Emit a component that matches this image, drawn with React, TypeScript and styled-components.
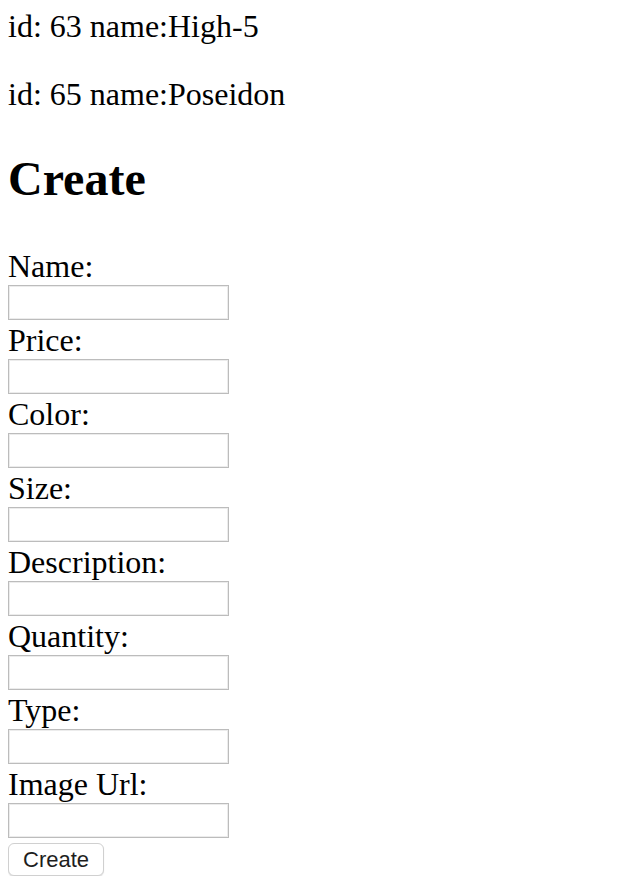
import React from "react";
import styled, { createGlobalStyle } from "styled-components";

const GlobalStyle = createGlobalStyle`
  html, body {
    margin: 0;
    padding: 0;
    background: #ffffff;
  }
  body {
    margin: 0 8px;
    font-family: "Liberation Serif", "Times New Roman", serif;
    font-size: 32px;
    color: #000000;
  }
`;

const Page = styled.div`
  display: flex;
  flex-direction: column;
  padding-top: 8px;
`;

const ProductList = styled.div`
  display: flex;
  flex-direction: column;
  gap: 32px;
`;

const ProductItem = styled.p`
  margin: 0;
  font-size: 32px;
  line-height: 36px;
  white-space: nowrap;
`;

const Heading = styled.h2`
  margin: 39px 0 42px;
  font-size: 48px;
  line-height: 55px;
  font-weight: bold;
`;

const Form = styled.form`
  display: flex;
  flex-direction: column;
  align-items: flex-start;
`;

const Field = styled.div`
  display: flex;
  flex-direction: column;
  align-items: flex-start;
`;

const Label = styled.label`
  display: block;
  font-size: 32px;
  line-height: 37px;
  white-space: nowrap;
`;

const TextInput = styled.input`
  box-sizing: border-box;
  display: block;
  margin: 0 0 2px;
  width: 221px;
  height: 35px;
  padding: 2px 4px;
  border: 1px solid #bcbcbc;
  box-shadow: inset 0 0 0 1px #ececec;
  border-radius: 0;
  background: #ffffff;
  font-family: "Liberation Sans", Arial, sans-serif;
  font-size: 20px;
  outline: none;
`;

const SubmitButton = styled.button`
  box-sizing: border-box;
  margin-top: 3px;
  height: 33px;
  padding: 0 14px;
  border: 1px solid #d0d0d0;
  border-radius: 6px;
  background: #ffffff;
  box-shadow: 0 1px 1px rgba(0, 0, 0, 0.12);
  font-family: "Liberation Sans", Arial, sans-serif;
  font-size: 22px;
  line-height: 31px;
  color: #1e1e1e;
  cursor: pointer;
`;

const products = [
  { id: 63, name: "High-5" },
  { id: 65, name: "Poseidon" },
];

const fields = [
  "Name",
  "Price",
  "Color",
  "Size",
  "Description",
  "Quantity",
  "Type",
  "Image Url",
];

export default function App() {
  return (
    <>
      <GlobalStyle />
      <Page>
        <ProductList>
          {products.map((p) => (
            <ProductItem key={p.id}>
              id: {p.id} name:{p.name}
            </ProductItem>
          ))}
        </ProductList>
        <Heading>Create</Heading>
        <Form onSubmit={(e) => e.preventDefault()}>
          {fields.map((f) => (
            <Field key={f}>
              <Label htmlFor={f}>{f}:</Label>
              <TextInput id={f} type="text" />
            </Field>
          ))}
          <SubmitButton type="submit">Create</SubmitButton>
        </Form>
      </Page>
    </>
  );
}
